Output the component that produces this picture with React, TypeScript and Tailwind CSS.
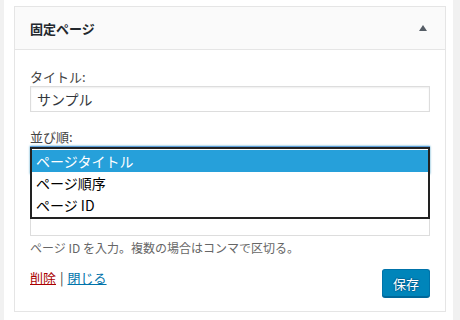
export default function App() {
  const options = ['ページタイトル', 'ページ順序', 'ページ ID'];

  return (
    <div
      className="h-[320px] w-[460px] overflow-hidden bg-[#f1f1f1] pl-[4px] pr-[7px]"
      style={{ fontFamily: '"Noto Sans CJK JP", "Noto Sans", sans-serif' }}
    >
      <div className="h-full bg-white pl-[10px] pr-[7px] pt-[6px]">
        {/* Widget */}
        <div className="border border-[#e5e5e5] bg-white">
          {/* Header */}
          <div className="flex h-[43px] items-center justify-between border-b border-[#e5e5e5] bg-[#fafafa] pl-[15px] pr-[18px]">
            <h3 className="text-[13px] font-bold leading-none text-[#23282d]">固定ページ</h3>
            <svg width="8" height="6" viewBox="0 0 8 6" className="mt-[-1px]">
              <path d="M4 0 L8 6 L0 6 Z" fill="#555d66" />
            </svg>
          </div>

          {/* Body */}
          <div className="px-[15px] pb-[14px] pt-[18px] text-[13px] text-[#444]">
            <label className="block leading-[18px]">タイトル:</label>
            <div className="flex h-[26px] items-center border border-[#ddd] px-[6px] text-[14px] text-[#32373c] shadow-[inset_0_1px_2px_rgba(0,0,0,0.07)]">
              サンプル
            </div>

            <label className="mt-[16px] block leading-[18px]">並び順:</label>
            <div className="relative">
              <div className="h-[28px] border border-[#5b9dd9] shadow-[0_0_2px_rgba(30,140,190,0.8)]" />
              {/* exclude field, covered by the open dropdown */}
              <div className="mt-[35px] h-[27px] border border-[#ddd]" />

              {/* Open dropdown */}
              <div className="absolute left-0 right-0 top-[1px] border-2 border-[#222] bg-white py-[1px] text-[14px] text-black">
                {options.map((o, i) => (
                  <div
                    key={o}
                    className={
                      i === 0
                        ? 'flex h-[22px] items-center bg-[#26a0da] px-[4px] text-white'
                        : 'flex h-[22px] items-center px-[4px]'
                    }
                  >
                    {o}
                  </div>
                ))}
              </div>
            </div>

            <p className="mt-[4px] text-[12px] leading-[16px] text-[#666]">
              ページ ID を入力。複数の場合はコンマで区切る。
            </p>

            <div className="mt-[13px] flex items-start justify-between">
              <div className="flex leading-[18px]">
                <a href="#" className="text-[#a00] underline">削除</a>
                <span className="px-[4px] text-[#444]">|</span>
                <a href="#" className="text-[#0073aa] underline">閉じる</a>
              </div>
              <button className="h-[28px] rounded-[3px] border border-[#0073aa] border-b-[#006799] bg-[#0085ba] px-[10px] text-[13px] leading-none text-white shadow-[0_1px_0_#006799] [text-shadow:0_-1px_1px_#006799,1px_0_1px_#006799,0_1px_1px_#006799,-1px_0_1px_#006799]">
                保存
              </button>
            </div>
          </div>
        </div>
      </div>
    </div>
  );
}
